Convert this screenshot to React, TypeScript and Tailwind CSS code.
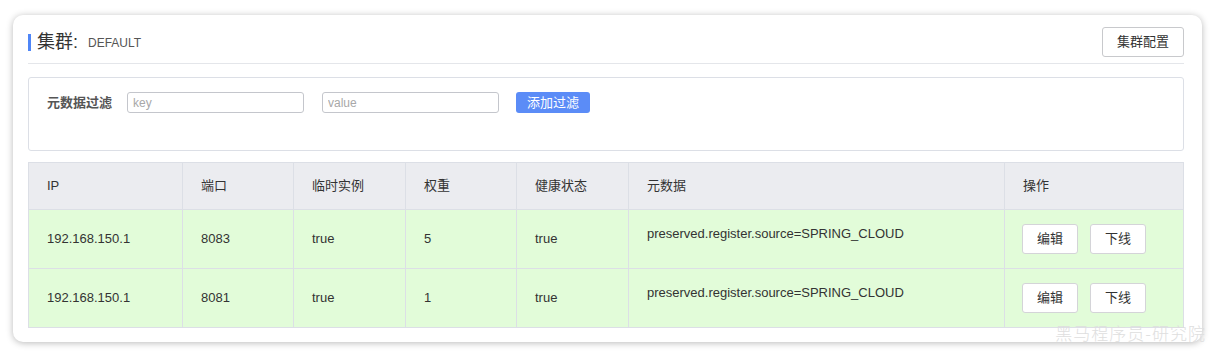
const font = "font-['Liberation_Sans','Noto_Sans_CJK_SC',sans-serif]"

const columns = [
  { title: "IP", width: "w-[154px]" },
  { title: "端口", width: "w-[111px]" },
  { title: "临时实例", width: "w-[112px]" },
  { title: "权重", width: "w-[111px]" },
  { title: "健康状态", width: "w-[112px]" },
  { title: "元数据", width: "w-[376px]" },
  { title: "操作", width: "w-[179px]" },
]

const instances = [
  { ip: "192.168.150.1", port: "8083", ephemeral: "true", weight: "5", healthy: "true", metadata: "preserved.register.source=SPRING_CLOUD" },
  { ip: "192.168.150.1", port: "8081", ephemeral: "true", weight: "1", healthy: "true", metadata: "preserved.register.source=SPRING_CLOUD" },
]

function SmallButton({ children }: { children: React.ReactNode }) {
  return (
    <button className="h-[30px] w-[56px] rounded-[3px] border border-[#d4d4d8] bg-white text-[13px] text-[#333]">
      {children}
    </button>
  )
}

export default function App() {
  return (
    <div className={`${font} bg-white w-[1216px] h-[358px] pt-[15px] pl-[13px]`}>
      <div className="relative w-[1189px] h-[327px] rounded-[10px] bg-white shadow-[0_1px_7px_rgba(0,0,0,0.28)] pl-[15px] pr-[18px] pt-[12px]">
        {/* header */}
        <div className="flex items-center justify-between h-[30px]">
          <div className="flex items-center">
            <span className="w-[3px] h-[17px] bg-[#4f86f7]" />
            <span className="ml-[6px] text-[18px] text-[#333] leading-none">集群:</span>
            <span className="ml-[10px] text-[12px] text-[#555] mt-[2px]">DEFAULT</span>
          </div>
          <button className="h-[30px] w-[82px] rounded-[3px] border border-[#c8c9cc] bg-white text-[13px] text-[#333]">
            集群配置
          </button>
        </div>
        <div className="mt-[6px] border-t border-[#e4e6ea]" />

        {/* filter */}
        <div className="mt-[13px] h-[74px] rounded-[3px] border border-[#dcdfe6] pl-[18px] pt-[14px]">
          <div className="flex items-center h-[21px]">
            <span className="text-[13px] font-bold text-[#555] w-[66px]">元数据过滤</span>
            <input
              placeholder="key"
              className="ml-[14px] h-[21px] w-[177px] rounded-[3px] border border-[#c4c6cc] px-[5px] text-[12px] outline-none placeholder:text-[#a8a8a8]"
            />
            <input
              placeholder="value"
              className="ml-[18px] h-[21px] w-[177px] rounded-[3px] border border-[#c4c6cc] px-[5px] text-[12px] outline-none placeholder:text-[#a8a8a8]"
            />
            <button className="ml-[17px] h-[21px] w-[74px] rounded-[3px] bg-[#5b8cf7] text-[13px] text-white">
              添加过滤
            </button>
          </div>
        </div>

        {/* table */}
        <table className="mt-[11px] w-[1155px] table-fixed border-collapse text-[13px] text-[#333]">
          <thead>
            <tr className="bg-[#ebecf0] h-[47px]">
              {columns.map((c) => (
                <th key={c.title} className={`${c.width} border border-[#dcdfe6] pl-[18px] text-left font-normal`}>
                  {c.title}
                </th>
              ))}
            </tr>
          </thead>
          <tbody>
            {instances.map((r, i) => (
              <tr key={i} className="bg-[#e2fcd9] h-[59px]">
                <td className="border border-[#dcdfe6] pl-[18px]">{r.ip}</td>
                <td className="border border-[#dcdfe6] pl-[18px]">{r.port}</td>
                <td className="border border-[#dcdfe6] pl-[18px]">{r.ephemeral}</td>
                <td className="border border-[#dcdfe6] pl-[18px]">{r.weight}</td>
                <td className="border border-[#dcdfe6] pl-[18px]">{r.healthy}</td>
                <td className="border border-[#dcdfe6] pl-[18px] pt-[14px] align-top">{r.metadata}</td>
                <td className="border border-[#dcdfe6] pl-[17px]">
                  <div className="flex gap-[12px]">
                    <SmallButton>编辑</SmallButton>
                    <SmallButton>下线</SmallButton>
                  </div>
                </td>
              </tr>
            ))}
          </tbody>
        </table>

        <span className="absolute right-[-4px] bottom-[-3px] text-[17px] tracking-[1px] font-light text-[#dedede] font-['Noto_Sans_CJK_SC',serif]">
          黑马程序员-研究院
        </span>
      </div>
    </div>
  )
}
